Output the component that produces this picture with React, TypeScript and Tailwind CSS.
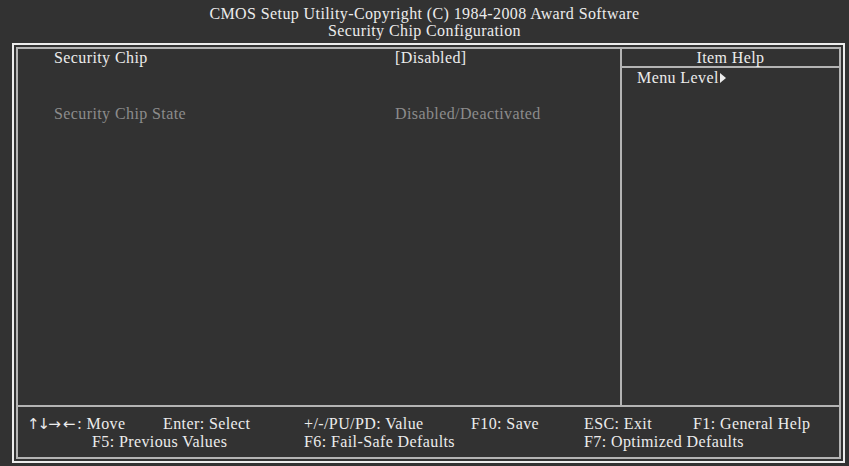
import React from "react";

export default function App() {
  return (
    <div
      className="w-[849px] h-[466px] bg-[#323232] text-[#ececec] overflow-hidden tracking-[0.4px]"
      style={{ fontFamily: '"Liberation Serif", "Times New Roman", serif' }}
    >
      {/* Header */}
      <div className="h-[43px] flex flex-col items-center pt-[5px] text-[16px] leading-[17px]">
        <div>CMOS Setup Utility-Copyright (C) 1984-2008 Award Software</div>
        <div>Security Chip Configuration</div>
      </div>
      {/* Frame */}
      <div className="ml-[12px] w-[833px] h-[420px] border-2 border-[#ececec] p-[2px]">
        <div className="w-full h-full border-2 border-[#b4b4b4] flex flex-col text-[16px] leading-[18px]">
          <div className="h-[358px] flex border-b-2 border-[#b4b4b4]">
            {/* Left panel */}
            <div className="w-[604px] border-r-2 border-[#b4b4b4] pl-[36px]">
              <div className="flex h-[18px]">
                <div className="w-[341px]">Security Chip</div>
                <div>[Disabled]</div>
              </div>
              <div className="flex h-[18px] mt-[38px] text-[#8c8c8c]">
                <div className="w-[341px]">Security Chip State</div>
                <div>Disabled/Deactivated</div>
              </div>
            </div>
            {/* Help panel */}
            <div className="flex-1 flex flex-col">
              <div className="h-[19px] border-b-2 border-[#b4b4b4] text-center">Item Help</div>
              <div className="pl-[15px] flex items-center h-[20px]">
                <span>Menu Level</span>
                <svg width="6" height="10" viewBox="0 0 6 10" className="ml-[1px]">
                  <polygon points="0,0 6,5 0,10" fill="#ececec" />
                </svg>
              </div>
            </div>
          </div>
          {/* Footer */}
          <div className="flex-1 pt-[8px] text-[16px] leading-[18px]">
            <div className="flex h-[18px]">
              <div className="w-[9px]" />
              <div className="w-[136px] flex items-center">
                <span
                  className="text-[15px] tracking-[0px] leading-[18px]"
                  style={{ fontFamily: '"DejaVu Sans", sans-serif' }}
                >
                  <span className="tracking-[-2px]">↑↓</span>
                  <span className="ml-[0px] tracking-[2px]">→←</span>
                </span>
                <span>: Move</span>
              </div>
              <div className="w-[141px]">Enter: Select</div>
              <div className="w-[167px]">+/-/PU/PD: Value</div>
              <div className="w-[113px]">F10: Save</div>
              <div className="w-[109px]">ESC: Exit</div>
              <div>F1: General Help</div>
            </div>
            <div className="flex h-[18px]">
              <div className="w-[74px]" />
              <div className="w-[212px]">F5: Previous Values</div>
              <div className="w-[280px]">F6: Fail-Safe Defaults</div>
              <div>F7: Optimized Defaults</div>
            </div>
          </div>
        </div>
      </div>
    </div>
  );
}
